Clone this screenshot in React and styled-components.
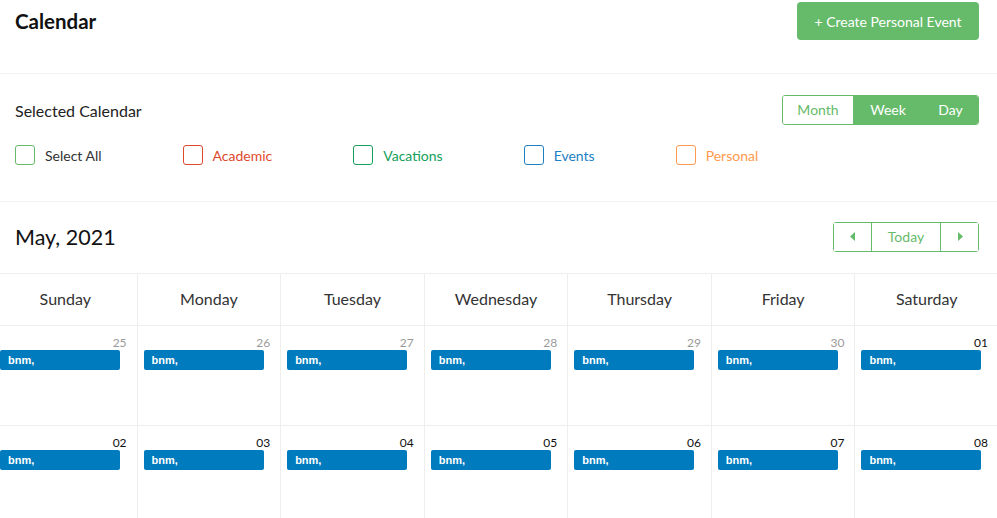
import React from 'react';
import styled, { createGlobalStyle } from 'styled-components';

const GlobalStyle = createGlobalStyle`
  html, body {
    margin: 0;
    padding: 0;
    background: #fff;
    overflow: hidden;
  }
  body {
    font-family: Lato, 'Open Sans', sans-serif;
    color: #222;
  }
`;

const green = '#66bb6a';

const Page = styled.div`
  width: 997px;
`;

const Header = styled.div`
  display: flex;
  align-items: center;
  justify-content: space-between;
  height: 38px;
  padding: 2px 18px 0 15px;
  margin-bottom: 33px;
`;

const Title = styled.h1`
  margin: 0;
  font-size: 20.5px;
  font-weight: 700;
  color: #111;
`;

const CreateButton = styled.button`
  height: 38px;
  width: 182px;
  border: none;
  border-radius: 4px;
  background: ${green};
  color: #fff;
  font-family: Lato, sans-serif;
  font-size: 14px;
  cursor: pointer;
`;

const Section = styled.div`
  border-top: 1px solid #f2f2f2;
  padding: ${(p) => p.$pad};
`;

const Row = styled.div`
  display: flex;
  align-items: center;
  justify-content: space-between;
`;

const Label = styled.div`
  font-size: 16px;
  color: #222;
`;

const Toggle = styled.div`
  display: flex;
  height: 30px;
  border: 1px solid ${green};
  border-radius: 3px;
  overflow: hidden;
  box-sizing: border-box;
`;

const ToggleBtn = styled.button`
  border: none;
  width: ${(p) => p.$w}px;
  background: ${(p) => (p.$active ? '#fff' : green)};
  color: ${(p) => (p.$active ? green : '#fff')};
  font-family: Lato, sans-serif;
  font-size: 14px;
  padding: 0 0 2px;
  cursor: pointer;
`;

const Checks = styled.div`
  display: flex;
  gap: 81px;
  margin-top: 20px;
`;

const Check = styled.label`
  display: flex;
  align-items: center;
  gap: 10px;
  font-size: 14px;
  color: ${(p) => p.$text};
`;

const Box = styled.span`
  width: 20px;
  height: 20px;
  box-sizing: border-box;
  border: 1px solid ${(p) => p.$color};
  border-radius: 3px;
`;

const Month = styled.div`
  font-size: 21.5px;
  color: #111;
`;

const Nav = styled.div`
  display: flex;
  height: 30px;
  border: 1px solid ${green};
  border-radius: 3px;
  box-sizing: border-box;
`;

const NavBtn = styled.button`
  width: ${(p) => p.$w}px;
  border: none;
  border-left: ${(p) => (p.$first ? 'none' : `1px solid ${green}`)};
  background: #fff;
  color: ${green};
  font-family: Lato, sans-serif;
  font-size: 14px;
  padding: 0 0 1px;
  display: flex;
  align-items: center;
  justify-content: center;
`;

const Grid = styled.div`
  display: grid;
  grid-template-columns: repeat(7, 1fr);
  width: 1005px;
  margin-left: -7px;
  border-top: 1px solid #eee;
`;

const DayName = styled.div`
  height: 52px;
  box-sizing: border-box;
  padding-bottom: 2px;
  display: flex;
  align-items: center;
  justify-content: center;
  font-size: 16px;
  color: #333;
  border-left: 1px solid #eee;
  border-bottom: 1px solid #eee;
`;

const Cell = styled.div`
  height: 100px;
  border-left: 1px solid #eee;
  border-bottom: 1px solid #eee;
  padding: 10px 10px 0 6px;
  box-sizing: border-box;
`;

const DateNum = styled.div`
  text-align: right;
  font-size: 12px;
  line-height: 14px;
  color: ${(p) => (p.$other ? '#9a9a9a' : '#111')};
`;

const EventBar = styled.div`
  width: 120px;
  height: 20px;
  background: #007bbd;
  border-radius: 2px;
  color: #fff;
  font-family: 'Liberation Sans', Arial, sans-serif;
  font-weight: 700;
  font-size: 11px;
  line-height: 20px;
  padding-left: 8px;
  box-sizing: border-box;
`;

const Caret = ({ dir }) => (
  <svg width="6" height="9" viewBox="0 0 6 9">
    {dir === 'left' ? (
      <polygon points="5,0 5,9 0,4.5" fill={green} />
    ) : (
      <polygon points="1,0 1,9 6,4.5" fill={green} />
    )}
  </svg>
);

const calendars = [
  { name: 'Select All', color: green, text: '#333' },
  { name: 'Academic', color: '#e0482c', text: '#e0482c' },
  { name: 'Vacations', color: '#14a05b', text: '#14a05b' },
  { name: 'Events', color: '#1c80c2', text: '#1c80c2' },
  { name: 'Personal', color: '#ff9a4e', text: '#ff9a4e' },
];

const days = ['Sunday', 'Monday', 'Tuesday', 'Wednesday', 'Thursday', 'Friday', 'Saturday'];

const weeks = [
  [
    { d: '25', other: true },
    { d: '26', other: true },
    { d: '27', other: true },
    { d: '28', other: true },
    { d: '29', other: true },
    { d: '30', other: true },
    { d: '01' },
  ],
  [{ d: '02' }, { d: '03' }, { d: '04' }, { d: '05' }, { d: '06' }, { d: '07' }, { d: '08' }],
];

export default function App() {
  return (
    <Page>
      <GlobalStyle />
      <Header>
        <Title>Calendar</Title>
        <CreateButton>+ Create Personal Event</CreateButton>
      </Header>

      <Section $pad="21px 18px 36px 15px">
        <Row>
          <Label>Selected Calendar</Label>
          <Toggle>
            <ToggleBtn $active $w={70}>Month</ToggleBtn>
            <ToggleBtn $w={70}>Week</ToggleBtn>
            <ToggleBtn $w={55}>Day</ToggleBtn>
          </Toggle>
        </Row>
        <Checks>
          {calendars.map((c) => (
            <Check key={c.name} $text={c.text}>
              <Box $color={c.color} />
              {c.name}
            </Check>
          ))}
        </Checks>
      </Section>

      <Section $pad="20px 18px 21px 15px">
        <Row>
          <Month>May, 2021</Month>
          <Nav>
            <NavBtn $first $w={37}><Caret dir="left" /></NavBtn>
            <NavBtn $w={69}>Today</NavBtn>
            <NavBtn $w={38}><Caret dir="right" /></NavBtn>
          </Nav>
        </Row>
      </Section>

      <Grid>
        {days.map((d) => (
          <DayName key={d}>{d}</DayName>
        ))}
        {weeks.flat().map((c, i) => (
          <Cell key={i}>
            <DateNum $other={c.other}>{c.d}</DateNum>
            <EventBar>bnm,</EventBar>
          </Cell>
        ))}
      </Grid>
    </Page>
  );
}
